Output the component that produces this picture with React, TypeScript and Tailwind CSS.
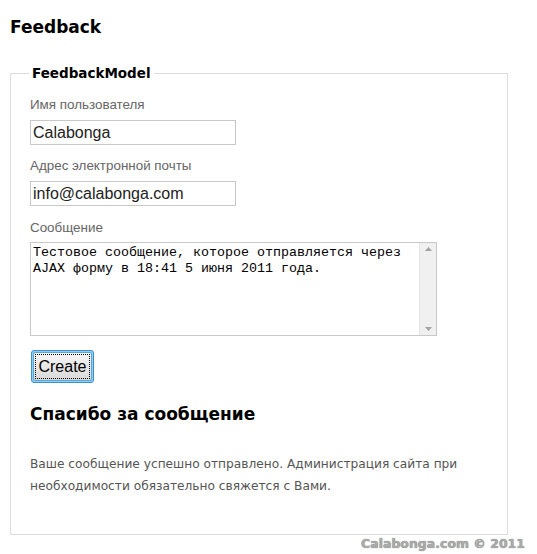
import { useState } from "react";

const labelCls = "block text-[13.4px] leading-[15px] text-[#666] font-['Liberation_Sans',Arial,sans-serif]";
const inputCls =
  "block w-[206px] h-[25px] border border-[#c8c8c8] px-[2px] text-[16px] text-[#222] font-['Liberation_Sans',Arial,sans-serif] outline-none";

export default function App() {
  const [name, setName] = useState("Calabonga");
  const [email, setEmail] = useState("info@calabonga.com");
  const [message, setMessage] = useState(
    "Тестовое сообщение, которое отправляется через AJAX форму в 18:41 5 июня 2011 года."
  );

  return (
    <div className="w-[537px] h-[554px] bg-white overflow-hidden font-['DejaVu_Sans',Verdana,sans-serif]">
      <h2 className="pl-[10px] pt-[16px] text-[17px] leading-[22px] font-bold text-black">Feedback</h2>

      <fieldset className="ml-[10px] mt-[25px] w-[498px] border border-[#dcdcdc] pl-[19px] pr-[19px] pt-[14px] pb-[37px]">
        <legend className="ml-[-1px] px-[3px] text-[13.5px] font-bold text-black">FeedbackModel</legend>

        <label className={labelCls}>Имя пользователя</label>
        <input className={`${inputCls} mt-[8px]`} value={name} onChange={(e) => setName(e.target.value)} />

        <label className={`${labelCls} mt-[13px]`}>Адрес электронной почты</label>
        <input className={`${inputCls} mt-[8px]`} value={email} onChange={(e) => setEmail(e.target.value)} />

        <label className={`${labelCls} mt-[14px]`}>Сообщение</label>
        <div className="mt-[7px] flex w-[407px] h-[94px] border border-[#c8c8c8]">
          <textarea
            className="flex-1 resize-none outline-none px-[2px] pt-[2px] text-[13.33px] leading-[16px] text-black font-['Liberation_Mono','Courier_New',monospace] overflow-hidden"
            value={message}
            onChange={(e) => setMessage(e.target.value)}
          />
          <div className="w-[17px] bg-[#f0f0f0] border-l border-[#e4e4e4] flex flex-col justify-between items-center py-[4px]">
            <svg width="7" height="4" viewBox="0 0 7 4">
              <path d="M0 4 L3.5 0 L7 4 Z" fill="#a3a3a3" />
            </svg>
            <svg width="7" height="4" viewBox="0 0 7 4">
              <path d="M0 0 L3.5 4 L7 0 Z" fill="#a3a3a3" />
            </svg>
          </div>
        </div>

        <div className="mt-[14px] ml-[1px] w-[63px] h-[33px] rounded-[3px] border border-[#3c8fcb] p-[1px] bg-[#8fd0f2]">
          <button className="w-full h-full rounded-[2px] border border-[#5aa6d8] bg-gradient-to-b from-[#f6f6f6] to-[#d9d9d9] outline-1 outline-dotted outline-black outline-offset-[-3px] text-[16px] text-black font-['Liberation_Sans',Arial,sans-serif]">
            Create
          </button>
        </div>

        <h3 className="mt-[20px] text-[17px] leading-[22px] font-bold text-black">Спасибо за сообщение</h3>

        <p className="mt-[28px] text-[12.2px] leading-[22px] text-[#555]">
          Ваше сообщение успешно отправлено. Администрация сайта при необходимости обязательно свяжется с Вами.
        </p>
      </fieldset>

      <div className="pr-[12px] text-right text-[12.5px] font-bold text-[#aaa] [text-shadow:0_0_1px_#666]">
        Calabonga.com © 2011
      </div>
    </div>
  );
}
